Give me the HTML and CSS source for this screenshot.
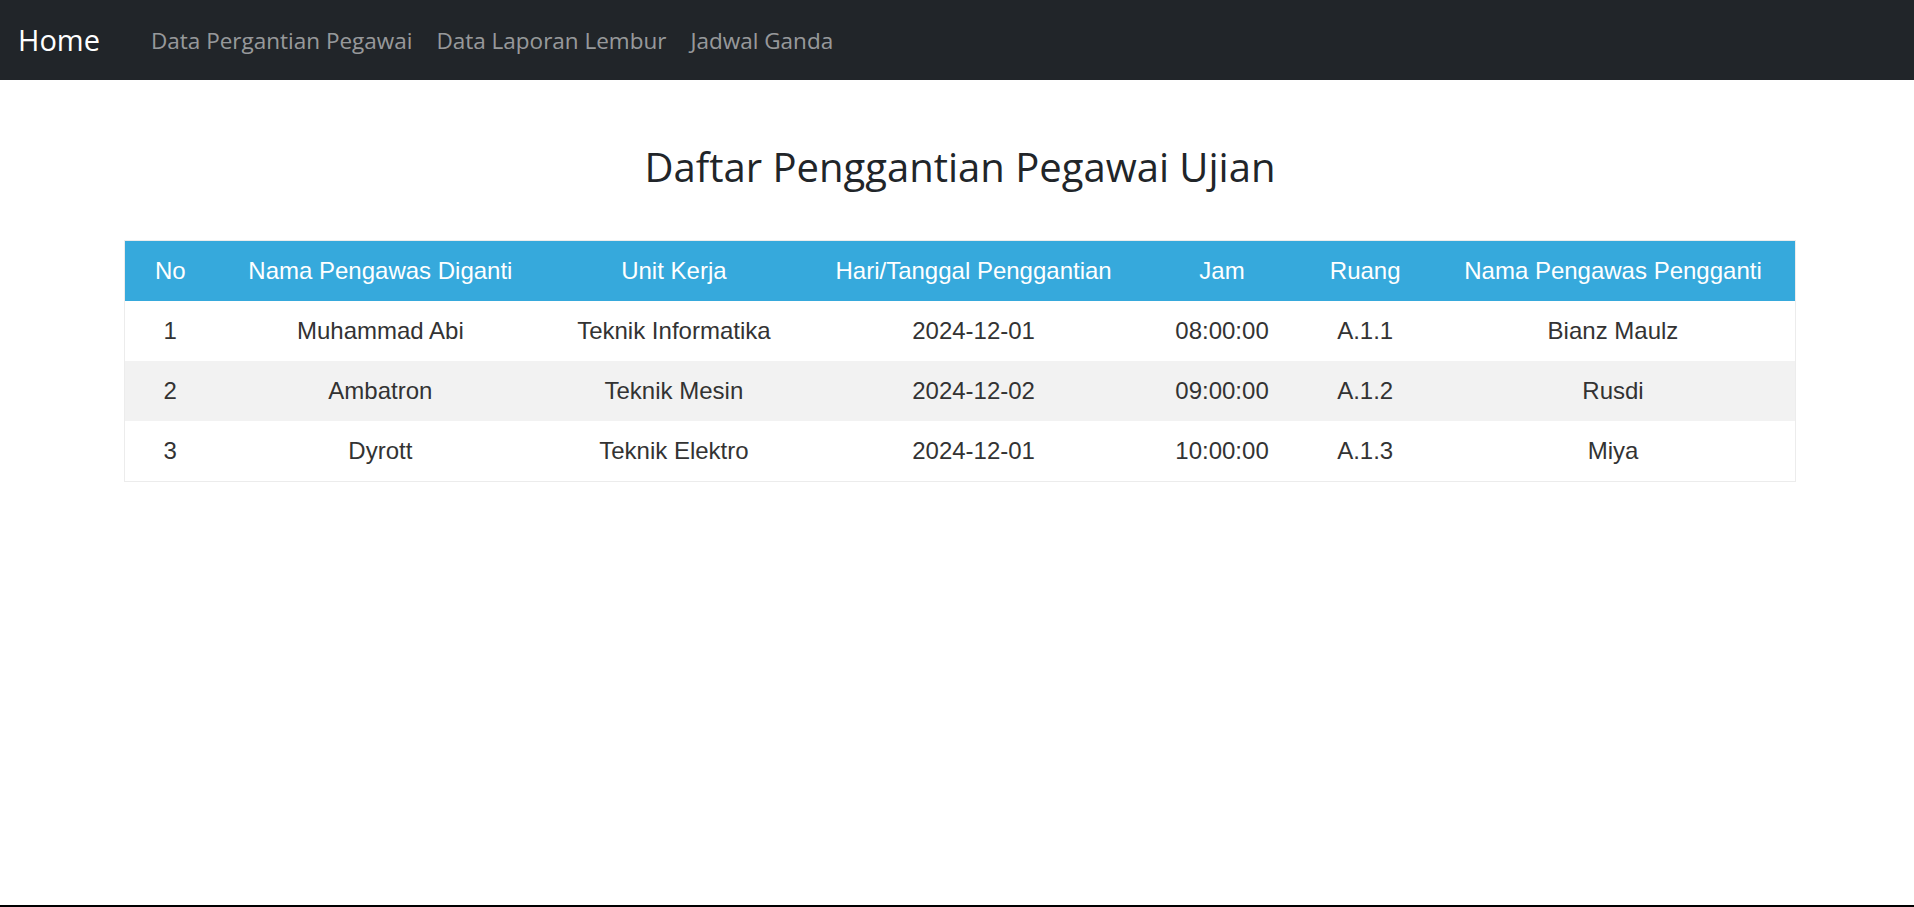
FILE: index.html
```html
<!DOCTYPE html>
<html lang="id">
<head>
<meta charset="utf-8">
<title>Daftar Penggantian Pegawai Ujian</title>
<link rel="stylesheet" href="styles.css">
</head>
<body>
<div class="page">
  <nav class="navbar">
    <a class="brand" href="#">Home</a>
    <div class="nav-links">
      <a class="nav-link" href="#">Data Pergantian Pegawai</a>
      <a class="nav-link" href="#">Data Laporan Lembur</a>
      <a class="nav-link" href="#">Jadwal Ganda</a>
    </div>
  </nav>
  <main class="content">
    <h1 class="title">Daftar Penggantian Pegawai Ujian</h1>
    <table class="data-table">
      <thead>
        <tr>
          <th>No</th>
          <th>Nama Pengawas Diganti</th>
          <th>Unit Kerja</th>
          <th>Hari/Tanggal Penggantian</th>
          <th>Jam</th>
          <th>Ruang</th>
          <th>Nama Pengawas Pengganti</th>
        </tr>
      </thead>
      <tbody>
        <tr>
          <td>1</td><td>Muhammad Abi</td><td>Teknik Informatika</td><td>2024-12-01</td><td>08:00:00</td><td>A.1.1</td><td>Bianz Maulz</td>
        </tr>
        <tr>
          <td>2</td><td>Ambatron</td><td>Teknik Mesin</td><td>2024-12-02</td><td>09:00:00</td><td>A.1.2</td><td>Rusdi</td>
        </tr>
        <tr>
          <td>3</td><td>Dyrott</td><td>Teknik Elektro</td><td>2024-12-01</td><td>10:00:00</td><td>A.1.3</td><td>Miya</td>
        </tr>
      </tbody>
    </table>
  </main>
</div>
</body>
</html>
```
FILE: styles.css
```css
html, body {
  margin: 0;
  padding: 0;
  background: #fff;
}

.page {
  min-height: 100vh;
  box-sizing: border-box;
  border-bottom: 2px solid #000;
  font-family: "Open Sans", "Noto Sans", sans-serif;
}

.navbar {
  height: 80px;
  background: #212529;
  display: flex;
  align-items: center;
  padding: 0 0 0 18px;
  box-sizing: border-box;
}

.brand {
  color: #fff;
  text-decoration: none;
  font-size: 29px;
  line-height: 40px;
  margin-right: 51px;
}

.nav-links {
  display: flex;
  align-items: center;
  gap: 24px;
}

.nav-link {
  color: rgba(255, 255, 255, 0.55);
  text-decoration: none;
  font-size: 22.5px;
  line-height: 32px;
  margin-top: 1px;
}

.content {
  padding: 63px 118px 0 124px;
}

.title {
  margin: 0 0 49px;
  font-size: 40px;
  line-height: 48px;
  font-weight: 400;
  color: #212529;
  text-align: center;
}

.data-table {
  width: 100%;
  border-collapse: collapse;
  border: 1px solid #ececec;
  font-family: "Liberation Sans", Arial, sans-serif;
  font-size: 24px;
  color: #333;
}

.data-table th,
.data-table td {
  padding: 12px 28.8px;
  line-height: 36px;
  text-align: center;
  font-weight: 400;
  white-space: nowrap;
}

.data-table th {
  background: #36a9dc;
  color: #fff;
}

.data-table tbody tr:nth-child(even) td {
  background: #f2f2f2;
}
```
